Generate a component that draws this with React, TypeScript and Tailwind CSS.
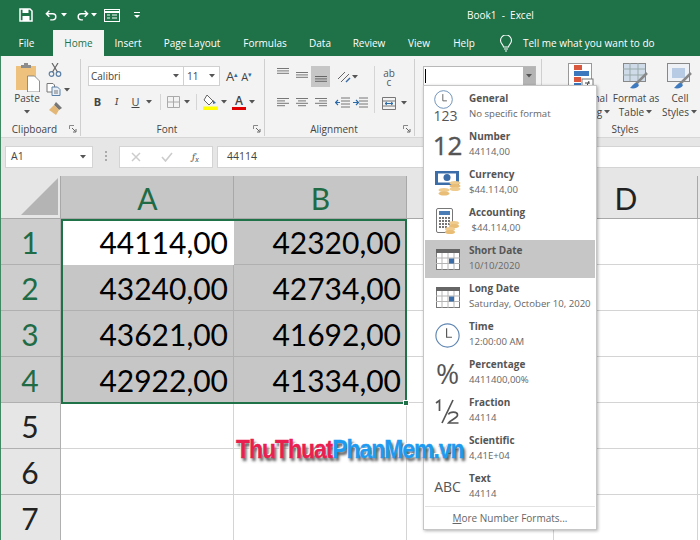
import React from "react";

const ui = "font-['Open_Sans','Noto_Sans',sans-serif]";
const cal = "font-['Lato','Carlito',sans-serif]";

const Caret = ({ c = "#555" }: { c?: string }) => (
  <svg width="7" height="4" viewBox="0 0 7 4" className="shrink-0"><path d="M0 0h6L3 3.5z" fill={c} /></svg>
);

const Launcher = () => (
  <svg width="8" height="8" viewBox="0 0 8 8" className="shrink-0">
    <path d="M.5 4V.5H5" fill="none" stroke="#888" />
    <path d="M3 3l3.5 3.5M7 4v3H4" fill="none" stroke="#666" />
  </svg>
);

const Lines = ({ widths, active }: { widths: number[][]; active?: boolean }) => (
  <svg width="14" height="12" viewBox="0 0 14 12">
    {widths.map(([x, w], i) => (
      <rect key={i} x={x} y={1 + i * 2.4} width={w} height="1" fill={active ? "#666" : "#777"} />
    ))}
  </svg>
);

const Group = ({ w, label, launcher, children, sep = true }: { w: string; label: string; launcher?: boolean; children: React.ReactNode; sep?: boolean }) => (
  <div className={`${w} flex h-full shrink-0 flex-col ${sep ? "border-r border-[#cfcfcf]" : ""}`}>
    <div className="min-h-0 flex-1">{children}</div>
    <div className="flex h-[14px] items-center">
      <span className={`flex-1 text-center text-[10px] leading-none text-[#444] ${ui}`}>{label}</span>
      {launcher && <span className="mr-[3px]"><Launcher /></span>}
    </div>
  </div>
);

function Clipboard() {
  return (
    <Group w="w-[81px]" label="Clipboard" launcher>
      <div className="flex pl-[11px] pt-[4px]">
        <div className="flex w-[32px] flex-col items-center">
          <svg width="25" height="29" viewBox="0 0 25 29">
            <rect x="1" y="3" width="20" height="24" fill="#eec27d" />
            <path d="M6 2h10v3H6z" fill="#8d8d8d" />
            <path d="M9 0h4v3H9z" fill="#8d8d8d" />
            <path d="M12.500 13h7l5 5v11h-12z" fill="#fff" stroke="#777" strokeWidth=".8" />
          </svg>
          <span className={`text-[10px] leading-[13px] text-[#444] ${ui}`}>Paste</span>
          <span className="mt-[5px]"><Caret /></span>
        </div>
        <div className="ml-[3px] flex flex-col items-start gap-[6px]">
          <svg width="14" height="14" viewBox="0 0 14 14" className="ml-[2px]">
            <circle cx="3.5" cy="11" r="2.300" fill="none" stroke="#5a7fa6" strokeWidth="1.200" />
            <circle cx="10.500" cy="11" r="2.300" fill="none" stroke="#5a7fa6" strokeWidth="1.200" />
            <path d="M4.500 9L10 0M9.500 9L4 0" stroke="#666" strokeWidth="1.200" />
          </svg>
          <div className="flex items-center gap-[3px]">
            <svg width="15" height="13" viewBox="0 0 15 13">
              <path d="M1 .5h6l1.500 1.500v7H1z" fill="#fff" stroke="#777" />
              <path d="M6 4h5.500L14 6.500v6H6z" fill="#e8eef5" stroke="#5a7fa6" />
              <path d="M8 8h4M8 10h4" stroke="#777" />
            </svg>
            <Caret />
          </div>
          <svg width="14" height="14" viewBox="0 0 14 14" className="ml-[2px]">
            <path d="M8 0l6 6-3 2-5-5z" fill="#777" />
            <path d="M6 3l5 5-3 5-7-5z" fill="#e3b877" />
          </svg>
        </div>
      </div>
    </Group>
  );
}

function Font() {
  return (
    <Group w="w-[184px]" label="Font" launcher>
      <div className="flex flex-col pl-[7px] pt-[7px]">
        <div className="flex h-[20px] items-center">
          <div className={`flex h-full w-[96px] items-center justify-between border border-[#d0d0d0] bg-white pl-[2px] pr-[3px] text-[10px] text-[#444] ${ui}`}>
            Calibri <Caret />
          </div>
          <div className={`flex h-full w-[36px] items-center justify-between border border-l-0 border-[#d0d0d0] bg-white pl-[3px] pr-[3px] text-[10px] text-[#444] ${ui}`}>
            11 <Caret />
          </div>
          <span className={`ml-[6px] text-[13px] leading-none text-[#444] ${ui}`}>A<sup className="text-[7px] text-[#2b6ca8]">▴</sup></span>
          <span className={`ml-[3px] text-[11px] leading-none text-[#444] ${ui}`}>A<sup className="text-[7px] text-[#2b6ca8]">▾</sup></span>
        </div>
        <div className={`ml-[-7px] mt-[6px] flex h-[20px] items-center pl-[7px] text-[11px] text-[#444] ${ui}`}>
          <span className="ml-[0px] w-[19px] text-center font-bold">B</span>
          <span className="w-[19px] text-center font-serif italic">I</span>
          <span className="w-[19px] text-center underline">U</span>
          <span className="ml-[1px]"><Caret /></span>
          <span className="ml-[7px] h-[16px] w-px bg-[#d5d5d5]" />
          <svg width="13" height="12" viewBox="0 0 13 12" className="ml-[6px]">
            <path d="M.500.500h12v11H.500zM6.500.500v11M.500 6h12" fill="none" stroke="#aaa" />
          </svg>
          <span className="ml-[4px]"><Caret /></span>
          <span className="ml-[5px] h-[16px] w-px bg-[#d5d5d5]" />
          <svg width="15" height="16" viewBox="0 0 15 16" className="ml-[6px]">
            <path d="M4 1l6 6-4 4-5-5z" fill="#fff" stroke="#666" />
            <path d="M10 6l3 3-3 1z" fill="#3b6ea8" />
            <rect y="12.500" width="15" height="3.500" fill="#ffff00" />
          </svg>
          <span className="ml-[3px]"><Caret /></span>
          <span className="ml-[4px] flex w-[14px] flex-col items-center leading-none">
            <span className="text-[12px] font-semibold leading-[12px]">A</span>
            <span className="h-[3px] w-[14px] bg-[#e00000]" />
          </span>
          <span className="ml-[3px]"><Caret /></span>
        </div>
      </div>
    </Group>
  );
}

function Alignment() {
  const Top = [[1, 12], [1, 12], [1, 12]];
  return (
    <Group w="w-[150px]" label="Alignment" launcher>
      <div className="flex pl-[8px] pt-[7px]">
        <div className="flex flex-col gap-[6px]">
          <div className="flex h-[21px] items-center">
            <span className="flex w-[19px] items-start justify-center self-stretch pt-[1px]"><Lines widths={Top} /></span>
            <span className="flex w-[19px] items-center justify-center self-stretch"><Lines widths={Top} /></span>
            <span className="flex w-[19px] items-end justify-center self-stretch bg-[#c6c6c6]"><Lines widths={Top} active /></span>
            <svg width="14" height="14" viewBox="0 0 14 14" className="ml-[7px]">
              <path d="M1 9l7-7M4 12l8-8" stroke="#666" />
              <path d="M9 12l4-4" stroke="#3b6ea8" strokeWidth="1.500" />
            </svg>
            <span className="ml-[1px]"><Caret /></span>
          </div>
          <div className="flex h-[20px] items-center">
            <span className="flex w-[19px] justify-center"><Lines widths={[[1, 12], [1, 8], [1, 12], [1, 8]]} /></span>
            <span className="flex w-[19px] justify-center"><Lines widths={[[1, 12], [3, 8], [1, 12], [3, 8]]} /></span>
            <span className="flex w-[19px] justify-center"><Lines widths={[[1, 12], [5, 8], [1, 12], [5, 8]]} /></span>
            <svg width="15" height="12" viewBox="0 0 15 12" className="ml-[5px]">
              <path d="M6 1h9M6 4h9M6 7h9M6 10h9" stroke="#777" />
              <path d="M0 5.500h5M3 3L.5 5.500 3 8" fill="none" stroke="#2b6ca8" strokeWidth="1.200" />
            </svg>
            <svg width="15" height="12" viewBox="0 0 15 12" className="ml-[3px]">
              <path d="M6 1h9M6 4h9M6 7h9M6 10h9" stroke="#777" />
              <path d="M0 5.500h5M3 3l2.500 2.500L3 8" fill="none" stroke="#2b6ca8" strokeWidth="1.200" />
            </svg>
          </div>
        </div>
        <span className="ml-[6px] mr-[7px] h-[47px] w-px bg-[#d5d5d5]" />
        <div className="flex flex-col gap-[6px]">
          <span className={`flex h-[21px] w-[14px] flex-col items-center pt-[3px] text-[10px] leading-[9px] text-[#555] ${ui}`}>
            <span>ab</span><span>c</span>
          </span>
          <div className="flex h-[20px] items-center gap-[5px]">
            <svg width="14" height="13" viewBox="0 0 14 13">
              <path d="M.500.500h13v12H.500zM.500 4h13M.500 9h13" fill="none" stroke="#777" />
              <path d="M3 6.500h8M5 5L3 6.500 5 8M9 5l2 1.500L9 8" fill="none" stroke="#2b6ca8" />
            </svg>
            <Caret />
          </div>
        </div>
      </div>
    </Group>
  );
}

function NumberGroup() {
  return (
    <Group w="w-[127px]" label="" launcher>
      <div className="pl-[8px] pt-[7px]">
        <div className="flex h-[20px] w-[113px] border border-[#b8b8b8] bg-white">
          <div className="flex-1 pl-[1px] pt-[2px]"><div className="h-[14px] w-px bg-black" /></div>
          <div className="flex w-[12px] items-center justify-center bg-[#b4b4b4]"><Caret /></div>
        </div>
      </div>
    </Group>
  );
}

const TableIcon = ({ fill }: { fill?: boolean }) => (
  <svg width="26" height="28" viewBox="0 0 26 28" className="shrink-0">
    <rect x=".5" y=".5" width="22" height="18" fill={fill ? "#cfdbe8" : "#eef2f6"} stroke="#888" />
    {fill ? (
      <path d="M0 6h22M0 12h22M7 0v18M15 0v18" stroke="#9aa" />
    ) : (
      <rect x="5" y="5" width="13" height="10" fill="#b7cce4" />
    )}
    <path d="M24 10L12 22" stroke="#888" strokeWidth="2.500" />
    <path d="M14 20c-3 0-5 3-7 5 4 1 8 0 9-3z" fill="#3d7ac0" />
  </svg>
);

function Styles() {
  return (
    <Group w="flex-1" label="Styles" sep={false}>
      <div className={`flex pt-[4px] text-[10px] leading-[14px] text-[#444] ${ui}`}>
        <div className="flex w-[78px] flex-col items-center">
          <svg width="26" height="28" viewBox="0 0 26 28" className="shrink-0">
            <rect x=".5" y=".5" width="23" height="24" fill="#fff" stroke="#999" />
            <rect x="6" y="2" width="8" height="5" fill="#d9573c" />
            <rect x="6" y="8" width="15" height="5" fill="#3b78bd" />
            <rect x="6" y="14" width="7" height="5" fill="#d9573c" />
            <rect x="6" y="20" width="7" height="4" fill="#3b78bd" />
            <rect x="14" y="16" width="11" height="11" fill="#fff" stroke="#777" />
            <path d="M17 20h5M17 23h5M21 18l-3 7" stroke="#444" />
          </svg>
          <span className="whitespace-nowrap">Conditional</span>
          <span className="flex items-center gap-[2px] whitespace-nowrap">Formatting <Caret /></span>
        </div>
        <div className="flex w-[32px] flex-col items-center">
          <TableIcon fill />
          <span className="whitespace-nowrap">Format as</span>
          <span className="flex items-center gap-[2px]">Table <Caret /></span>
        </div>
        <div className="flex w-[56px] flex-col items-center">
          <TableIcon />
          <span>Cell</span>
          <span className="flex items-center gap-[2px] whitespace-nowrap">Styles <Caret /></span>
        </div>
      </div>
    </Group>
  );
}

const DateIcon = () => (
  <svg width="24" height="21" viewBox="0 0 24 21">
    <rect x=".5" y=".5" width="23" height="20" fill="#fff" stroke="#777" />
    <rect x="0" y="0" width="24" height="4" fill="#666" />
    <path d="M0 9h24M0 14.500h24M6 4v17M12 4v17M18 4v17" stroke="#b5b5b5" />
    <rect x="13" y="9.500" width="5" height="5" fill="#3b6ea8" />
  </svg>
);

const Clock = ({ s = 28 }: { s?: number }) => (
  <svg width={s} height={s} viewBox="0 0 28 28">
    <circle cx="14" cy="14" r="13" fill="#fff" stroke="#5f86b3" strokeWidth="1.300" />
    <path d="M13 6v10h6" fill="none" stroke="#555" strokeWidth="1.300" />
  </svg>
);

const icons: React.ReactNode[] = [
  <div key="g" className="relative h-[28px] w-[30px]">
    <span className="absolute left-[1px] top-[-3px]"><Clock s={19} /></span>
    <span className={`absolute bottom-[-3px] left-[1px] text-[14px] leading-[17px] text-[#555] ${ui}`}>123</span>
  </div>,
  <span key="n" className={`text-[26px] leading-none text-[#555] [-webkit-text-stroke:0.4px_#555] ${ui}`}>12</span>,
  <svg key="c" width="26" height="25" viewBox="0 0 26 25">
    <rect x="0" y="0" width="24" height="14" fill="#3b6ea8" />
    <rect x="3" y="2.500" width="18" height="9" fill="#fff" />
    <circle cx="12" cy="6.500" r="3.500" fill="#3b6ea8" />
    <ellipse cx="20" cy="12" rx="5.500" ry="2" fill="#f0cb8e" />
    <ellipse cx="20" cy="15" rx="5.500" ry="2" fill="#e9bd76" />
    <ellipse cx="20" cy="18" rx="5.500" ry="2" fill="#f0cb8e" />
    <ellipse cx="9" cy="19" rx="5.500" ry="2" fill="#f0cb8e" />
    <ellipse cx="9" cy="22.500" rx="5.500" ry="2" fill="#e9bd76" />
  </svg>,
  <svg key="a" width="24" height="26" viewBox="0 0 24 26">
    <rect x=".5" y=".5" width="16" height="24" rx="1.500" fill="#fff" stroke="#777" />
    <rect x="3" y="3" width="11" height="4" fill="#4a7db5" />
    <path d="M3 10h11M3 13h11M3 16h11M3 19h8" stroke="#777" strokeWidth="1.800" strokeDasharray="2 1" />
    <ellipse cx="18" cy="15" rx="5" ry="2" fill="#f0cb8e" />
    <ellipse cx="18" cy="18" rx="5" ry="2" fill="#e9bd76" />
    <ellipse cx="14" cy="21" rx="5" ry="2" fill="#f0cb8e" />
    <ellipse cx="14" cy="24" rx="5" ry="2" fill="#e9bd76" />
  </svg>,
  <DateIcon key="s" />,
  <DateIcon key="l" />,
  <Clock key="t" s={25} />,
  <span key="p" className={`text-[28px] leading-none text-[#555] ${ui}`}>%</span>,
  <svg key="f" width="25" height="25" viewBox="0 0 25 25">
    <path d="M1 4l3.500-2.500V12M18 1L7 24" fill="none" stroke="#555" strokeWidth="1.700" />
    <path d="M13.500 15.500c1-3 9-3.500 9 .5 0 3-7 5-9 8h10" fill="none" stroke="#555" strokeWidth="1.700" />
  </svg>,
  <span key="sc" className={`text-[14px] leading-none text-[#555] ${ui}`}>10<sup className="text-[8px]">2</sup></span>,
  <span key="x" className={`text-[14px] leading-none text-[#555] ${ui}`}>ABC</span>,
];

const formats: [string, string][] = [
  ["General", "No specific format"],
  ["Number", "44114,00"],
  ["Currency", "$44.114,00"],
  ["Accounting", "\u00a0$44.114,00"],
  ["Short Date", "10/10/2020"],
  ["Long Date", "Saturday, October 10, 2020"],
  ["Time", "12:00:00 AM"],
  ["Percentage", "4411400,00%"],
  ["Fraction", "44114"],
  ["Scientific", "4,41E+04"],
  ["Text", "44114"],
];

function FormatMenu() {
  return (
    <div className={`absolute left-[423px] top-[85px] z-20 w-[174px] border border-[#c6c6c6] bg-white pt-[2px] shadow-[1px_1px_3px_rgba(0,0,0,0.3)] ${ui}`}>
      {formats.map(([t, s], i) => (
        <div key={t} className={`mx-px flex h-[38px] items-center ${i === 4 ? "bg-[#c6c6c6]" : ""}`}>
          <div className="flex w-[44px] shrink-0 justify-center pl-[1px]">{icons[i]}</div>
          <div className="flex flex-col pb-[2px] text-[9.600px] leading-[15px]">
            <span className="text-[10px] font-bold text-[#555]">{t}</span>
            <span className="whitespace-pre text-[#666]">{s}</span>
          </div>
        </div>
      ))}
      <div className="mx-px flex h-[23px] items-center justify-center border-t border-[#e2e2e2] text-[10px] text-[#666]">
        <span><span className="underline">M</span>ore Number Formats...</span>
      </div>
    </div>
  );
}

const colsCls = "grid-cols-[61px_173px_173px_147px_144px_1fr]";

const ColHead = ({ c, on }: { c?: string; on?: boolean }) => (
  <div className={`flex items-center justify-center border-b border-r border-[#a8a8a8] pl-[1px] pt-[2px] text-[30px] ${cal} ${on ? "bg-[#c6c6c6] text-[#1f6b45]" : "bg-[#e6e6e6] text-[#222]"}`}>{c}</div>
);

const RowHead = ({ n, on }: { n: number; on?: boolean }) => (
  <div className={`flex items-center justify-center border-b border-r border-[#b0b0b0] pt-[2px] text-[30px] ${cal} ${on ? "bg-[#cdcdcd] text-[#1f6b45]" : "bg-[#e6e6e6] text-[#222]"}`}>{n}</div>
);

const Cell = ({ v, sel, first }: { v?: string; sel?: boolean; first?: boolean }) => (
  <div className={`flex items-center justify-end border-b border-r pr-[5px] pt-[2px] text-[30px] text-black ${cal} ${sel ? (first ? "border-transparent bg-white" : "border-[#b0b0b0] bg-[#c6c6c6]") : "border-[#d4d4d4] bg-white"}`}>{v}</div>
);

const rows: [string, string][] = [
  ["44114,00", "42320,00"],
  ["43240,00", "42734,00"],
  ["43621,00", "41692,00"],
  ["42922,00", "41334,00"],
];

export default function App() {
  return (
    <div className="relative h-[540px] w-[700px] overflow-hidden bg-white">
      {/* Title bar */}
      <div className={`flex h-[30px] items-center bg-[#1f7148] text-white ${ui}`}>
        <svg width="14" height="14" viewBox="0 0 14 14" className="ml-[19px]">
          <path d="M1 1h10l2 2v10H1z" fill="none" stroke="#fff" strokeWidth="1.500" />
          <rect x="3.500" y="1" width="6" height="4" fill="#fff" />
          <rect x="3.500" y="8" width="7" height="5" fill="#fff" />
        </svg>
        <svg width="13" height="13" viewBox="0 0 15 13" className="ml-[12px]">
          <path d="M5 1L1.500 4.500 5 8M2 4.500h7a3.500 3.500 0 010 7H6" fill="none" stroke="#fff" strokeWidth="1.600" />
        </svg>
        <span className="ml-[3px]"><Caret c="#fff" /></span>
        <svg width="13" height="13" viewBox="0 0 15 13" className="ml-[8px]">
          <path d="M10 1l3.500 3.500L10 8M13 4.500H6a3.500 3.500 0 000 7h2" fill="none" stroke="#fff" strokeWidth="1.600" />
        </svg>
        <span className="ml-[2px]"><Caret c="#fff" /></span>
        <svg width="16" height="13" viewBox="0 0 16 13" className="ml-[6px]">
          <rect x=".5" y=".5" width="15" height="12" fill="none" stroke="#fff" />
          <path d="M0 3h16" stroke="#fff" strokeWidth="2" />
          <path d="M3 6h3M3 9h3M8 6h5M8 9h5" stroke="#fff" />
        </svg>
        <svg width="6" height="7" viewBox="0 0 6 7" className="ml-[14px]">
          <path d="M0 0h6v1H0zM0 3h6L3 6z" fill="#fff" />
        </svg>
        <span className="ml-[327px] whitespace-pre text-[10px]">Book1  -  Excel</span>
      </div>
      {/* Tabs */}
      <div className={`flex h-[26px] items-stretch bg-[#1f7148] text-[10px] text-white ${ui}`}>
        {[
          ["File", "w-[53px]"],
          ["Home", "w-[51px]"],
          ["Insert", "w-[48px]"],
          ["Page Layout", "w-[80px]"],
          ["Formulas", "w-[66px]"],
          ["Data", "w-[44px]"],
          ["Review", "w-[54px]"],
          ["View", "w-[46px]"],
          ["Help", "w-[44px]"],
        ].map(([t, w]) => (
          <div key={t} className={`flex ${w} items-center justify-center pt-[1px] ${t === "Home" ? "bg-[#f3f3f3] text-[#1f7148]" : ""}`}>{t}</div>
        ))}
        <div className="ml-[13px] flex items-center pt-[1px]">
          <svg width="14" height="17" viewBox="0 0 14 17">
            <path d="M4.500 12c0-2-3-3.500-3-6.500a5.500 5.500 0 0111 0c0 3-3 4.500-3 6.500zM5 14h4M6 16h2" fill="none" stroke="#fff" strokeWidth="1.100" />
          </svg>
          <span className="ml-[10px] whitespace-nowrap">Tell me what you want to do</span>
        </div>
      </div>
      {/* Ribbon */}
      <div className="flex h-[81px] bg-[#f3f3f3] pb-[1px] pt-[3px]">
        <Clipboard />
        <Font />
        <Alignment />
        <NumberGroup />
        <Styles />
      </div>
      {/* Formula bar */}
      <div className={`flex h-[39px] items-start border-t border-[#d6d6d6] bg-[#e6e6e6] pt-[8px] text-[10.500px] text-[#444] ${ui}`}>
        <div className="ml-[5px] flex h-[22px] w-[88px] items-center justify-between border border-[#d4d4d4] bg-white pl-[5px] pr-[5px]">
          A1 <Caret />
        </div>
        <div className="flex w-[26px] flex-col items-center gap-[2px] pt-[5px]">
          <span className="h-[2px] w-[2px] bg-[#aaa]" />
          <span className="h-[2px] w-[2px] bg-[#aaa]" />
          <span className="h-[2px] w-[2px] bg-[#aaa]" />
        </div>
        <div className="flex h-[22px] w-[94px] items-center border border-[#d4d4d4] bg-white">
          <svg width="10" height="10" viewBox="0 0 10 10" className="ml-[11px]"><path d="M1 1l8 8M9 1L1 9" stroke="#ccc" strokeWidth="1.500" /></svg>
          <svg width="12" height="10" viewBox="0 0 12 10" className="ml-[20px]"><path d="M1 5l3.500 4L11 1" fill="none" stroke="#ccc" strokeWidth="1.600" /></svg>
          <span className="ml-[19px] font-serif text-[11px] italic text-[#666]">f<sub className="text-[8px]">x</sub></span>
        </div>
        <div className="ml-[4px] flex h-[22px] flex-1 items-center border border-r-0 border-[#d4d4d4] bg-white pl-[9px]">44114</div>
      </div>
      {/* Sheet */}
      <div className={`grid ${colsCls} grid-rows-[43px_repeat(7,46px)]`}>
        <div className="flex items-end justify-end border-b border-r border-[#a8a8a8] bg-[#e6e6e6] pb-[3px] pr-[2px]">
          <svg width="37" height="37" viewBox="0 0 37 37"><path d="M37 0v37H0z" fill="#b4b4b4" /></svg>
        </div>
        <ColHead c="A" on />
        <ColHead c="B" on />
        <ColHead />
        <ColHead c="D" />
        <ColHead />
        {Array.from({ length: 7 }, (_, i) => (
          <React.Fragment key={i}>
            <RowHead n={i + 1} on={i < 4} />
            <Cell v={rows[i]?.[0]} sel={i < 4} first={i === 0} />
            <Cell v={rows[i]?.[1]} sel={i < 4} />
            <Cell />
            <Cell />
            <Cell />
          </React.Fragment>
        ))}
      </div>
      {/* Window edge */}
      <div className="absolute bottom-0 left-0 top-[56px] z-10 w-px bg-[#3f8a63]" />
      {/* Selection */}
      <div className="pointer-events-none absolute left-[61px] top-[219px] z-10 h-[185px] w-[346px] border-2 border-[#1f7148]">
        <span className="absolute bottom-[-4px] right-[-4px] h-[6px] w-[6px] border border-white bg-[#1f7148]" />
      </div>
      <FormatMenu />
      {/* Watermark */}
      <div className="absolute left-[236px] top-[434px] z-30 origin-left scale-x-[0.91] whitespace-nowrap font-['Liberation_Sans',sans-serif] text-[25px] font-bold leading-[30px] tracking-[-1px] [-webkit-text-stroke:0.3px_currentColor] [text-shadow:-1px_-1px_0_#fff,2px_3px_3px_#555]">
        <span className="text-[#e8204f]">ThuThuat</span>
        <span className="text-[#1e9bf0]">PhanMem.vn</span>
      </div>
    </div>
  );
}
